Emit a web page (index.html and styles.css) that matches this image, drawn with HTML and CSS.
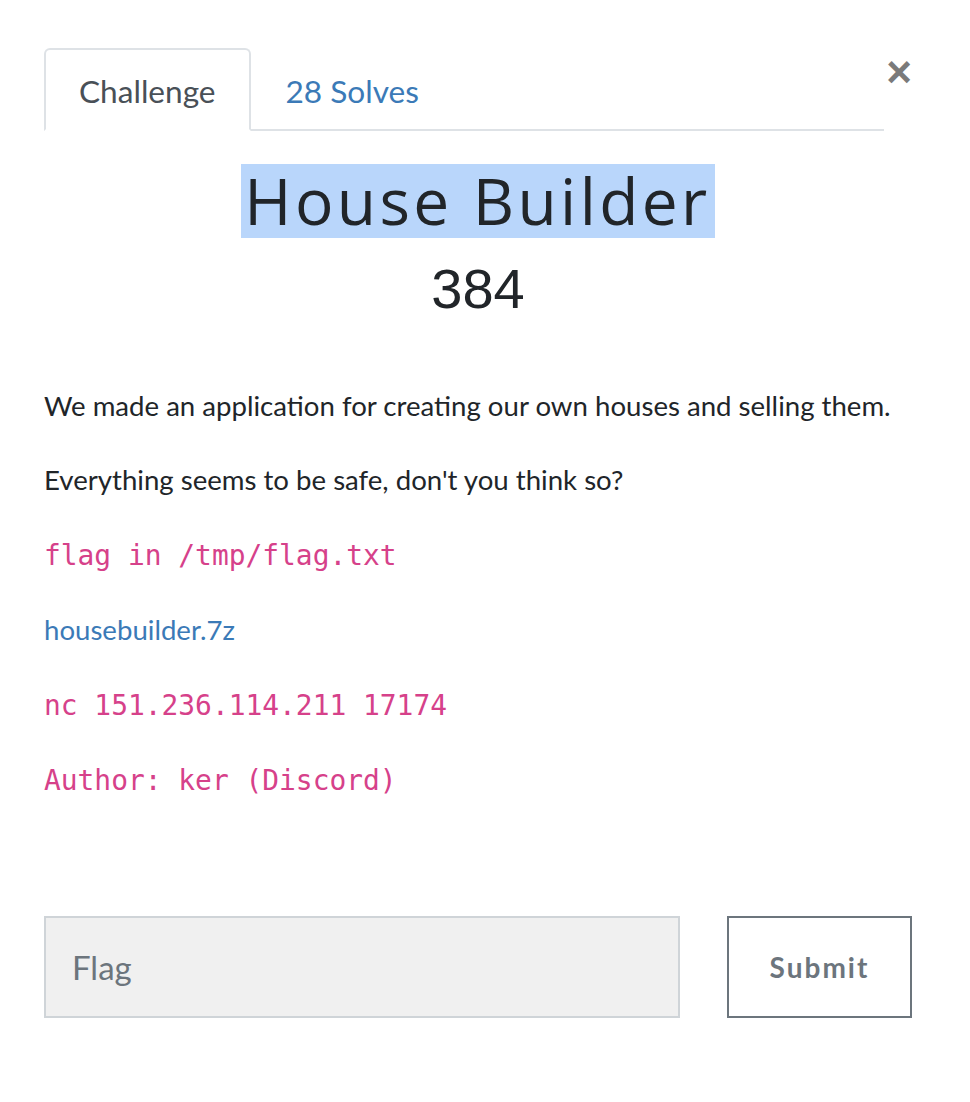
FILE: index.html
```html
<!DOCTYPE html>
<html lang="en">
<head>
<meta charset="utf-8">
<title>House Builder</title>
<link rel="stylesheet" href="styles.css">
</head>
<body>
<div class="modal">
  <div class="header">
    <ul class="tabs">
      <li class="tab active">Challenge</li>
      <li class="tab">28 Solves</li>
    </ul>
    <button class="close" type="button">&times;</button>
  </div>
  <h2 class="name"><span class="sel">House Builder</span></h2>
  <h3 class="value">384</h3>
  <div class="desc">
    <p>We made an application for creating our own houses and selling them.</p>
    <p>Everything seems to be safe, don't you think so?</p>
    <p><code>flag in /tmp/flag.txt</code></p>
    <p><a href="#">housebuilder.7z</a></p>
    <p><code>nc 151.236.114.211 17174</code></p>
    <p><code>Author: ker (Discord)</code></p>
  </div>
  <form class="submit-row">
    <input class="flag" type="text" placeholder="Flag">
    <button class="submit" type="button">Submit</button>
  </form>
</div>
</body>
</html>
```
FILE: styles.css
```css
html, body {
  margin: 0;
  padding: 0;
  background: #ffffff;
}
body {
  font-family: "Lato", "Open Sans", sans-serif;
  color: #212529;
  font-size: 27.6px;
  line-height: 44.6px;
}
.modal {
  width: 868px;
  padding: 48px 0 0 44px;
}
.header {
  display: flex;
  align-items: flex-start;
}
.tabs {
  list-style: none;
  margin: 0;
  padding: 0;
  display: flex;
  width: 840px;
  border-bottom: 2px solid #dee2e6;
}
.tab {
  padding: 17px 33px 14px 33px;
  margin-bottom: -2px;
  border: 2px solid transparent;
  border-radius: 6px 6px 0 0;
  color: #3b7ab7;
  font-size: 31.6px;
  line-height: 48px;
}
.tab.active {
  color: #495057;
  border-color: #dee2e6 #dee2e6 #ffffff;
  background: #ffffff;
}
.close {
  margin: 2px 0 0 0;
  padding: 0;
  width: 28px;
  border: 0;
  background: transparent;
  font-family: "Liberation Sans", "Arial", sans-serif;
  font-weight: 700;
  font-size: 44px;
  line-height: 1;
  color: #7a7a7a;
  text-align: right;
}
.name {
  margin: 33px 0 0 0;
  text-align: center;
  font-family: "Open Sans", sans-serif;
  font-weight: 400;
  font-size: 64px;
  line-height: 74px;
}
.sel {
  display: inline-block;
  background: #b9d6fb;
  padding: 0 4px 0 3px;
  letter-spacing: 3.4px;
  line-height: 74px;
}
.value {
  margin: 17px 0 0 0;
  text-align: center;
  font-family: "Liberation Sans", "Arial", sans-serif;
  font-weight: 400;
  font-size: 56px;
  line-height: 67px;
}
.desc {
  margin-top: 62px;
}
.desc p {
  margin: 0 0 29.9px 0;
}
code {
  font-family: "DejaVu Sans Mono", monospace;
  font-size: 27.9px;
  color: #d6418a;
}
a {
  color: #3b7ab7;
  text-decoration: none;
}
.submit-row {
  margin-top: 112px;
  display: flex;
  gap: 47px;
}
.flag {
  box-sizing: border-box;
  width: 636px;
  height: 102px;
  margin: 0;
  padding: 0 26px;
  background: #f0f0f0;
  border: 2px solid #cfd4d8;
  border-radius: 0;
  font-family: "Lato", sans-serif;
  font-size: 33px;
  color: #495057;
  outline: none;
}
.flag::placeholder {
  color: #6c757d;
}
.submit {
  box-sizing: border-box;
  width: 185px;
  height: 102px;
  margin: 0;
  border: 2px solid #6c757d;
  border-radius: 0;
  background: #ffffff;
  color: #6c757d;
  font-family: "Lato", sans-serif;
  font-weight: 700;
  font-size: 28px;
  letter-spacing: 2px;
}
```
